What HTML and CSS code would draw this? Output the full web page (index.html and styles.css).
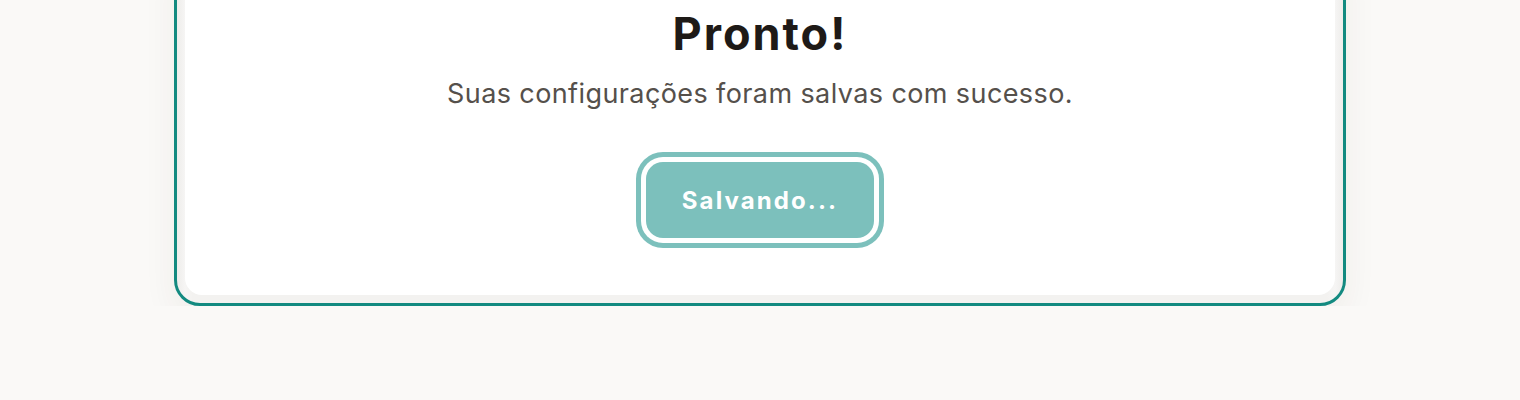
FILE: index.html
```html
<!DOCTYPE html>
<html lang="pt-BR">
<head>
<meta charset="utf-8">
<title>Pronto!</title>
<link rel="stylesheet" href="styles.css">
</head>
<body>
<main class="page">
  <section class="card">
    <div class="panel">
      <h1 class="title">Pronto!</h1>
      <p class="subtitle">Suas configurações foram salvas com sucesso.</p>
      <button class="btn" type="button">Salvando...</button>
    </div>
  </section>
</main>
</body>
</html>
```
FILE: styles.css
```css
html, body {
  margin: 0;
  padding: 0;
  background: #faf9f7;
  font-family: Inter, "Noto Sans", "Liberation Sans", sans-serif;
}
.page {
  display: flex;
  justify-content: center;
}
.card {
  width: 1172px;
  box-sizing: border-box;
  margin-top: -60px;
  border: 3px solid #138a80;
  border-radius: 26px;
  padding: 0 8px 8px 8px;
  background: linear-gradient(90deg, #eeedeb 0, #f6f5f4 8px, #f3f2f0 16px, #f3f2f0 calc(100% - 16px), #f6f5f4 calc(100% - 8px), #eeedeb 100%);
  box-shadow: 0 14px 34px rgba(70, 50, 30, 0.06);
}
.panel {
  background: #fff;
  border-radius: 0 0 17px 17px;
  padding: 64px 0 57px;
  display: flex;
  flex-direction: column;
  align-items: center;
}
.title {
  margin: 0;
  font-size: 45px;
  line-height: 53px;
  font-weight: 700;
  color: #1e1a17;
  letter-spacing: 2px;
}
.subtitle {
  margin: 16px 0 0;
  font-size: 27px;
  line-height: 36px;
  color: #55504b;
  font-weight: 400;
  letter-spacing: 0.4px;
}
.btn {
  margin-top: 50px;
  width: 228px;
  height: 76px;
  border: 0;
  border-radius: 17px;
  background: #7cc0bc;
  color: #fff;
  font-family: Inter, "Noto Sans", "Liberation Sans", sans-serif;
  font-size: 24px;
  font-weight: 700;
  letter-spacing: 2.1px;
  box-shadow: 0 0 0 5px #fff, 0 0 0 10px #7cc0bc;
  cursor: default;
}
```
